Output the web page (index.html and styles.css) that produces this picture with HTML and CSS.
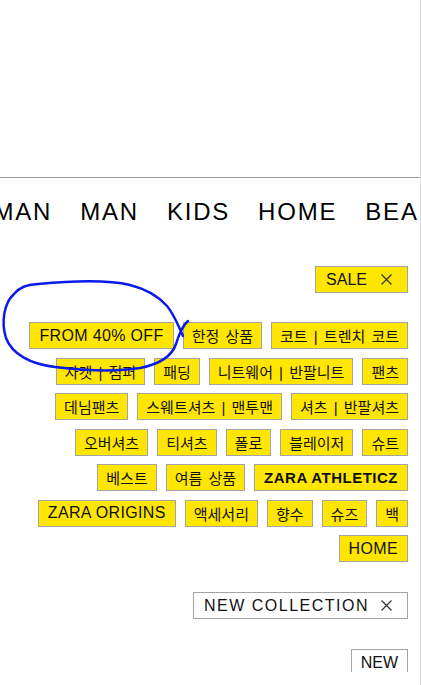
FILE: index.html
```html
<!DOCTYPE html>
<html lang="ko">
<head>
<meta charset="utf-8">
<title>ZARA</title>
<link rel="stylesheet" href="styles.css">
</head>
<body>
<div class="page">
  <div class="viewport">
    <div class="hero"></div>
    <nav class="cats">
      <ul class="cat-list">
        <li>WOMAN</li>
        <li>MAN</li>
        <li>KIDS</li>
        <li>HOME</li>
        <li>BEAUTY</li>
      </ul>
    </nav>
    <div class="row sale-row">
      <span class="chip yellow"><span class="chip-text">SALE</span><svg class="x" viewBox="0 0 11 11" width="11" height="11"><path d="M0.5 0.5 L10.5 10.5 M10.5 0.5 L0.5 10.5"/></svg></span>
    </div>
    <ul class="tags">
      <li class="tag">FROM 40% OFF</li>
      <li class="tag ko">한정 상품</li>
      <li class="tag ko">코트 | 트렌치 코트</li>
      <li class="tag ko">자켓 | 점퍼</li>
      <li class="tag ko">패딩</li>
      <li class="tag ko">니트웨어 | 반팔니트</li>
      <li class="tag ko">팬츠</li>
      <li class="tag ko">데님팬츠</li>
      <li class="tag ko">스웨트셔츠 | 맨투맨</li>
      <li class="tag ko">셔츠 | 반팔셔츠</li>
      <li class="tag ko">오버셔츠</li>
      <li class="tag ko">티셔츠</li>
      <li class="tag ko">폴로</li>
      <li class="tag ko">블레이저</li>
      <li class="tag ko">슈트</li>
      <li class="tag ko">베스트</li>
      <li class="tag ko">여름 상품</li>
      <li class="tag bold">ZARA ATHLETICZ</li>
      <li class="tag origins">ZARA ORIGINS</li>
      <li class="tag ko">액세서리</li>
      <li class="tag ko">향수</li>
      <li class="tag ko">슈즈</li>
      <li class="tag ko">백</li>
      <li class="tag">HOME</li>
    </ul>
    <div class="row newcol-row">
      <span class="chip wide"><span class="chip-text">NEW COLLECTION</span><svg class="x" viewBox="0 0 11 11" width="11" height="11"><path d="M0.5 0.5 L10.5 10.5 M10.5 0.5 L0.5 10.5"/></svg></span>
    </div>
    <div class="row new-row">
      <span class="chip plain">NEW</span>
    </div>
  </div>
  <svg class="annot" viewBox="0 0 420 685" width="420" height="685">
    <path d="M188 321 C182 326 179 334 176 344 C172 356 160 364 140 368 C115 372 80 370 55 367 C30 364 12 354 6 338 C1 322 4 303 14 294 C20 287 26 285 38 284 C70 281 105 279 130 285 C150 290 160 298 167 306 C173 313 177 322 183 336"/>
  </svg>
</div>
</body>
</html>
```

FILE: styles.css
```css
html, body {
  margin: 0;
  padding: 0;
  background: #fff;
}

body {
  font-family: "Liberation Sans", Arial, "Noto Sans CJK KR", sans-serif;
  color: #111;
}

.page {
  position: relative;
  width: 420px;
  height: 685px;
  border-right: 1px solid #dcdcdc;
}

.viewport {
  height: 672px;
  overflow: hidden;
}

.hero {
  height: 177px;
}

.cats {
  border-top: 1px solid #9a9a9a;
  padding-top: 19px;
  overflow: hidden;
}

.cat-list {
  display: flex;
  gap: 28px;
  margin: 0 0 0 -51.5px;
  padding: 0;
  list-style: none;
  white-space: nowrap;
  font-size: 24px;
  line-height: 30px;
  letter-spacing: 1.8px;
  color: #000;
}

.row {
  display: flex;
  justify-content: flex-end;
  padding: 0 12px;
}

.sale-row {
  margin-top: 39px;
}

.newcol-row,
.new-row {
  margin-top: 30px;
}

.chip {
  display: flex;
  align-items: center;
  gap: 14px;
  height: 27px;
  box-sizing: border-box;
  border: 1px solid #a3a3a3;
  padding: 0 15px 0 10px;
  font-size: 16px;
  background: #fff;
  white-space: nowrap;
}

.chip.yellow {
  background: #ffe600;
}

.chip.wide {
  gap: 12px;
}

.chip.wide .chip-text {
  letter-spacing: 1.5px;
}

.chip.plain {
  padding: 0 9px;
}

.x {
  display: block;
  fill: none;
  stroke: #333;
  stroke-width: 1.2;
}

.tags {
  display: flex;
  flex-wrap: wrap;
  justify-content: flex-end;
  gap: 8.5px 9px;
  margin: 29px 0 0;
  padding: 0 12px;
  list-style: none;
}

.tag {
  display: flex;
  align-items: center;
  height: 27px;
  box-sizing: border-box;
  padding: 0 9px;
  border: 1px solid #a3a3a3;
  background: #ffe600;
  font-size: 16px;
  letter-spacing: 0.35px;
  white-space: nowrap;
}

.tag.ko {
  font-size: 15px;
  letter-spacing: 0;
  word-spacing: 2px;
  padding: 0 8px;
}

.tag.bold {
  font-weight: 700;
  font-size: 15px;
  letter-spacing: 0.5px;
}

.tag.origins {
  letter-spacing: 0.35px;
}

.annot {
  position: absolute;
  top: 0;
  left: 0;
  pointer-events: none;
  fill: none;
  stroke: #0a1ae8;
  stroke-width: 2.5;
  stroke-linecap: round;
  stroke-linejoin: round;
}
```
